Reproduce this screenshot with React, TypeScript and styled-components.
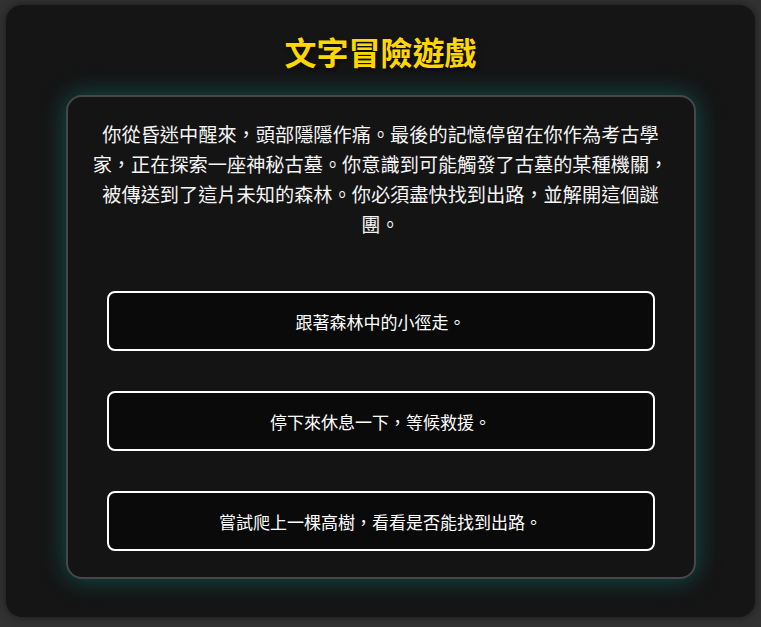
import React from "react";
import styled, { createGlobalStyle } from "styled-components";

const GlobalStyle = createGlobalStyle`
  html, body {
    margin: 0;
    padding: 0;
    background: #323232;
  }
  body {
    padding: 5px 6px 10px 6px;
    font-family: "Noto Sans CJK TC", "Noto Sans", sans-serif;
    color: #f2f2f2;
  }
`;

const Game = styled.div`
  background: #151515;
  border-radius: 16px;
  box-shadow: 0 0 10px rgba(0, 0, 0, 0.5);
  height: 612px;
  box-sizing: border-box;
  padding: 26px 0 40px;
  display: flex;
  flex-direction: column;
  align-items: center;
`;

const Title = styled.h1`
  margin: 0 0 24px;
  font-size: 32px;
  line-height: 40px;
  font-weight: 700;
  color: #ffd700;
  text-shadow: 2px 2px 4px rgba(0, 0, 0, 0.6);
`;

const Card = styled.div`
  width: 630px;
  box-sizing: border-box;
  background: #141414;
  border: 2px solid #474747;
  border-radius: 16px;
  padding: 22px 20px 26px;
  box-shadow: 0 0 24px rgba(0, 200, 190, 0.34);
  display: flex;
  flex-direction: column;
`;

const Story = styled.p`
  margin: 0;
  font-size: 19.2px;
  line-height: 30px;
  text-align: center;
  color: #f4f4f4;
`;

const Choices = styled.div`
  margin-top: 52px;
  display: flex;
  flex-direction: column;
  gap: 40px;
  padding: 0 19px;
`;

const Choice = styled.button`
  height: 60px;
  box-sizing: border-box;
  background: #0a0a0a;
  border: 2px solid #ffffff;
  border-radius: 8px;
  color: #ffffff;
  font-family: "Noto Sans CJK TC", "Noto Sans", sans-serif;
  font-size: 17px;
  cursor: pointer;
  padding: 0;
`;

const choices = [
  "跟著森林中的小徑走。",
  "停下來休息一下，等候救援。",
  "嘗試爬上一棵高樹，看看是否能找到出路。",
];

export default function App() {
  return (
    <>
      <GlobalStyle />
      <Game>
        <Title>文字冒險遊戲</Title>
        <Card>
          <Story>
            你從昏迷中醒來，頭部隱隱作痛。最後的記憶停留在你作為考古學家，正在探索一座神秘古墓。你意識到可能觸發了古墓的某種機關，被傳送到了這片未知的森林。你必須盡快找到出路，並解開這個謎團。
          </Story>
          <Choices>
            {choices.map((c) => (
              <Choice key={c}>{c}</Choice>
            ))}
          </Choices>
        </Card>
      </Game>
    </>
  );
}
